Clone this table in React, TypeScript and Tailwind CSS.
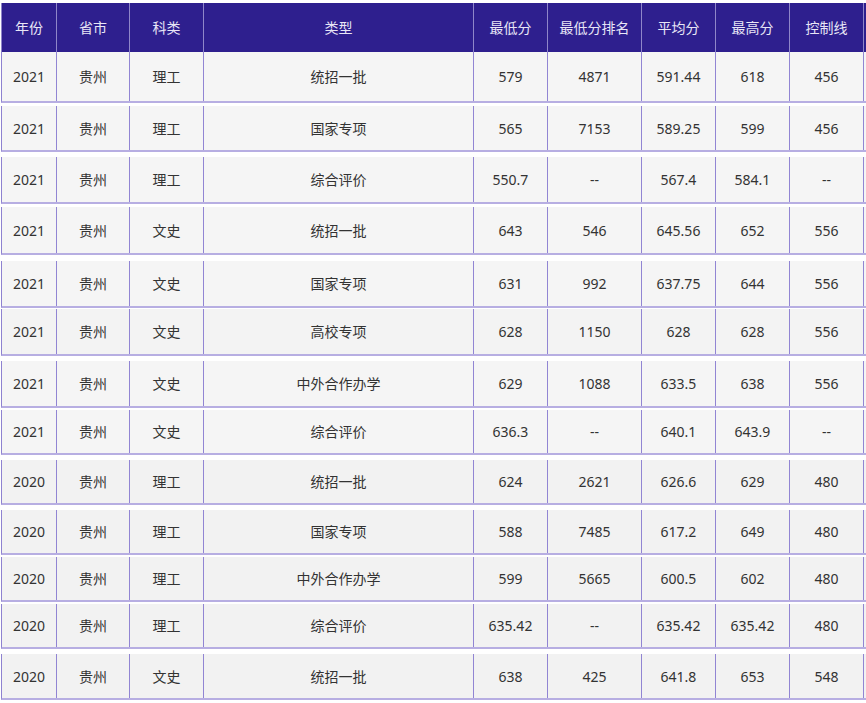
import React from 'react';

const cols = ['w-[55px]', 'w-[73px]', 'w-[74px]', 'w-[270px]', 'w-[74px]', 'w-[94px]', 'w-[74px]', 'w-[74px]', 'w-[74px]'];

const headers = ['年份', '省市', '科类', '类型', '最低分', '最低分排名', '平均分', '最高分', '控制线'];

// each strip of the stitched screenshot has its own gap and height
const rows = [
    { box: 'mt-0 h-[51px] bg-[#f5f5f5]', cells: ['2021', '贵州', '理工', '统招一批', '579', '4871', '591.44', '618', '456'] },
    { box: 'mt-[3px] h-[46px] bg-[#f5f5f5]', cells: ['2021', '贵州', '理工', '国家专项', '565', '7153', '589.25', '599', '456'] },
    { box: 'mt-[5px] h-[47px] bg-[#f5f5f5]', cells: ['2021', '贵州', '理工', '综合评价', '550.7', '--', '567.4', '584.1', '--'] },
    { box: 'mt-[3px] h-[48px] bg-[#f5f5f5]', cells: ['2021', '贵州', '文史', '统招一批', '643', '546', '645.56', '652', '556'] },
    { box: 'mt-[6px] h-[47px] bg-[#f5f5f5]', cells: ['2021', '贵州', '文史', '国家专项', '631', '992', '637.75', '644', '556'] },
    { box: 'mt-[1px] h-[47px] bg-[#f3f3f3]', cells: ['2021', '贵州', '文史', '高校专项', '628', '1150', '628', '628', '556'] },
    { box: 'mt-[5px] h-[47px] bg-[#f5f5f5]', cells: ['2021', '贵州', '文史', '中外合作办学', '629', '1088', '633.5', '638', '556'] },
    { box: 'mt-[2px] h-[45px] bg-[#f5f5f5]', cells: ['2021', '贵州', '文史', '综合评价', '636.3', '--', '640.1', '643.9', '--'] },
    { box: 'mt-[5px] h-[45px] bg-[#f2f2f2]', cells: ['2020', '贵州', '理工', '统招一批', '624', '2621', '626.6', '629', '480'] },
    { box: 'mt-[5px] h-[45px] bg-[#f2f2f2]', cells: ['2020', '贵州', '理工', '国家专项', '588', '7485', '617.2', '649', '480'] },
    { box: 'mt-[2px] h-[45px] bg-[#f2f2f2]', cells: ['2020', '贵州', '理工', '中外合作办学', '599', '5665', '600.5', '602', '480'] },
    { box: 'mt-[2px] h-[45px] bg-[#f2f2f2]', cells: ['2020', '贵州', '理工', '综合评价', '635.42', '--', '635.42', '635.42', '480'] },
    { box: 'mt-[5px] h-[46px] bg-[#f2f2f2]', cells: ['2020', '贵州', '文史', '统招一批', '638', '425', '641.8', '653', '548'] },
];

export default function App() {
    return (
        <div className="w-[866px] h-[703px] bg-white pl-[1px] overflow-hidden font-['Noto_Sans','Noto_Sans_CJK_SC',sans-serif] text-[14px]">
            {/* Header */}
            <div className="mt-[3px] h-[49px] flex bg-[#2e1f8e] border-l border-[#8f86c9] text-[#e8e6f6]">
                {headers.map((h, i) => (
                    <div key={h} className={`${cols[i]} shrink-0 flex items-center justify-center border-r border-[#8f86c9]`}>
                        {h}
                    </div>
                ))}
            </div>

            {/* Body strips */}
            {rows.map((row, r) => (
                <div key={r} className={`${row.box} flex border-l border-b-2 border-l-[#8e82d0] border-b-[#b7aee2] text-[#333333]`}>
                    {row.cells.map((c, i) => (
                        <div key={i} className={`${cols[i]} shrink-0 flex items-center justify-center border-r border-[#9185d3]`}>
                            {c}
                        </div>
                    ))}
                </div>
            ))}
        </div>
    );
}
